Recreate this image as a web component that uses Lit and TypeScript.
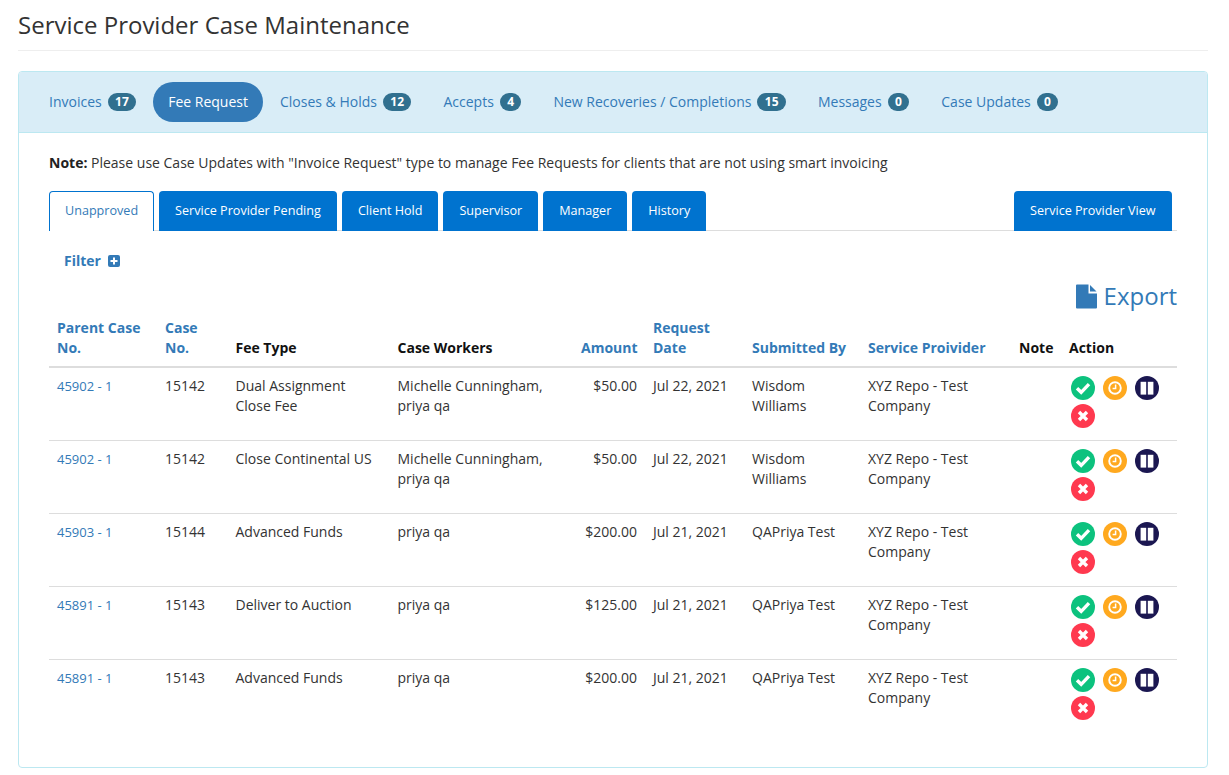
import { LitElement, html, css, svg } from "lit";
import { customElement } from "lit/decorators.js";

const pills = [
  ["Invoices", "17"],
  ["Fee Request", ""],
  ["Closes & Holds", "12"],
  ["Accepts", "4"],
  ["New Recoveries / Completions", "15"],
  ["Messages", "0"],
  ["Case Updates", "0"],
];
const tabs = ["Service Provider Pending", "Client Hold", "Supervisor", "Manager", "History"];
const rows = [
  ["45902 - 1", "15142", "Dual Assignment Close Fee", "Michelle Cunningham, priya qa", "$50.00", "Jul 22, 2021", "Wisdom Williams"],
  ["45902 - 1", "15142", "Close Continental US", "Michelle Cunningham, priya qa", "$50.00", "Jul 22, 2021", "Wisdom Williams"],
  ["45903 - 1", "15144", "Advanced Funds", "priya qa", "$200.00", "Jul 21, 2021", "QAPriya Test"],
  ["45891 - 1", "15143", "Deliver to Auction", "priya qa", "$125.00", "Jul 21, 2021", "QAPriya Test"],
  ["45891 - 1", "15143", "Advanced Funds", "priya qa", "$200.00", "Jul 21, 2021", "QAPriya Test"],
];

const check = svg`<path d="M6 12.2l4.2 4.1 7.8-8.2" fill="none" stroke="#fff" stroke-width="3.4"/>`;
const clock = svg`<circle cx="12" cy="12" r="5.8" fill="none" stroke="#fff" stroke-width="1.9"/><path d="M12.6 8.6v4h-3" fill="none" stroke="#fff" stroke-width="1.5"/>`;
const pause = svg`<rect x="5.6" y="5.8" width="5.6" height="12.8" fill="#fff"/><rect x="12.8" y="5.8" width="5.6" height="12.8" fill="#fff"/>`;
const cross = svg`<path d="M8 8l8 8M16 8l-8 8" fill="none" stroke="#fff" stroke-width="3.4"/>`;

@customElement("app-root")
export class AppRoot extends LitElement {
  static styles = css`
    :host {
      display: block;
      font-family: "Open Sans", sans-serif;
      font-size: 14px;
      line-height: 20px;
      color: #333;
      background: #fff;
    }
    .page { padding: 0 21px 0 18px; }
    .title {
      margin: 0 0 20px;
      height: 50px;
      box-sizing: content-box;
      border-bottom: 1px solid #eee;
      font-size: 24px;
      font-weight: 400;
      line-height: 50px;
      white-space: nowrap;
    }
    .panel {
      border: 1px solid #bce8f1;
      border-radius: 4px;
      height: 695px;
      overflow: hidden;
    }
    .heading {
      display: flex;
      gap: 2px;
      padding: 10px 15px;
      background: #d9edf7;
      border-bottom: 1px solid #bce8f1;
    }
    .pill {
      display: flex;
      align-items: center;
      height: 40px;
      padding: 0 15px;
      color: #337ab7;
      white-space: nowrap;
      border-radius: 20px;
    }
    .pill.active { background: #337ab7; color: #fff; }
    .badge {
      margin-left: 6px;
      padding: 0 7.4px;
      height: 18px;
      line-height: 18px;
      border-radius: 10px;
      background: #31708f;
      color: #fff;
      font-size: 12px;
      font-weight: 700;
    }
    .body { padding: 20px 30px 0; }
    .note { margin: 0 0 18px; white-space: nowrap; }
    .note b { color: #222; }
    .tabs {
      display: flex;
      gap: 5px;
      height: 40px;
      box-sizing: border-box;
      border-bottom: 1px solid #ddd;
    }
    .tab {
      display: flex;
      align-items: center;
      height: 40px;
      box-sizing: border-box;
      padding: 0 16px 1px;
      font-size: 12.6px;
      background: #0073cf;
      color: #fff;
      border-radius: 4px 4px 0 0;
      white-space: nowrap;
    }
    .tab.active {
      background: #fff;
      color: #337ab7;
      padding: 0 15px 1px;
      border: 1px solid #0073cf;
      border-bottom: none;
    }
    .tab.right { margin-left: auto; margin-right: 5px; padding: 0 16.5px 1px; }
    .filter {
      display: flex;
      align-items: center;
      gap: 7px;
      margin: 20px 0 0 15px;
      height: 20px;
      color: #337ab7;
      font-weight: 700;
    }
    .export {
      display: flex;
      justify-content: flex-end;
      align-items: center;
      gap: 7px;
      margin-top: 8px;
      height: 34px;
      margin-bottom: -3px;
      font-size: 24px;
      color: #337ab7;
    }
    table { border-collapse: collapse; table-layout: fixed; width: 1128px; }
    th {
      padding: 8px;
      text-align: left;
      vertical-align: bottom;
      font-weight: 700;
      color: #111;
      border-bottom: 2px solid #ddd;
    }
    th.link { color: #337ab7; }
    td {
      padding: 8px;
      vertical-align: top;
      border-top: 1px solid #ddd;
    }
    tr:first-child td { border-top: none; }
    .r { text-align: right; }
    .case { font-size: 13px; color: #337ab7; }
    .actions { display: flex; flex-wrap: wrap; gap: 4px 8px; height: 56px; padding-left: 2px; align-content: flex-start; }
    .actions svg { display: block; width: 24px; height: 24px; }
  `;

  private icon(color: string, inner: unknown) {
    return html`<svg viewBox="0 0 24 24"><circle cx="12" cy="12" r="12" fill=${color}></circle>${inner}</svg>`;
  }

  render() {
    return html`<div class="page">
      <h1 class="title">Service Provider Case Maintenance</h1>
      <div class="panel">
        <div class="heading">
          ${pills.map(([label, n]) => html`<div class="pill ${n ? "" : "active"}">${label}${n ? html`<span class="badge">${n}</span>` : ""}</div>`)}
        </div>
        <div class="body">
          <p class="note"><b>Note:</b> Please use Case Updates with "Invoice Request" type to manage Fee Requests for clients that are not using smart invoicing</p>
          <div class="tabs">
            <div class="tab active">Unapproved</div>
            ${tabs.map((t) => html`<div class="tab">${t}</div>`)}
            <div class="tab right">Service Provider View</div>
          </div>
          <div class="filter">Filter
            <svg width="12" height="12" viewBox="0 0 12 12"><rect width="12" height="12" rx="2" fill="#337ab7"></rect><path d="M6 2.5v7M2.5 6h7" stroke="#fff" stroke-width="2"></path></svg>
          </div>
          <div class="export">
            <svg width="21" height="25" viewBox="0 0 21 25"><path d="M1 .5a1 1 0 0 0-1 1v22a1 1 0 0 0 1 1h19a1 1 0 0 0 1-1V9.5H12.5V.5z" fill="#337ab7"></path><path d="M14 1l6.5 6.5H14z" fill="#337ab7"></path></svg>
            <span>Export</span>
          </div>
          <table>
            <colgroup>
              <col style="width:108px" /><col style="width:70.5px" /><col style="width:162px" /><col style="width:183.5px" /><col style="width:72px" /><col style="width:99px" /><col style="width:116px" /><col style="width:151px" /><col style="width:50px" /><col style="width:116px" />
            </colgroup>
            <thead>
              <tr>
                <th class="link">Parent Case No.</th>
                <th class="link">Case No.</th>
                <th>Fee Type</th>
                <th>Case Workers</th>
                <th class="link r">Amount</th>
                <th class="link">Request Date</th>
                <th class="link">Submitted By</th>
                <th class="link">Service Proivider</th>
                <th>Note</th>
                <th>Action</th>
              </tr>
            </thead>
            <tbody>
              ${rows.map(
                (r) => html`<tr>
                  <td class="case">${r[0]}</td>
                  <td>${r[1]}</td>
                  <td>${r[2]}</td>
                  <td>${r[3]}</td>
                  <td class="r">${r[4]}</td>
                  <td>${r[5]}</td>
                  <td>${r[6]}</td>
                  <td>XYZ Repo - Test Company</td>
                  <td></td>
                  <td>
                    <div class="actions">
                      ${this.icon("#0cc27e", check)}${this.icon("#ffa91f", clock)}${this.icon("#1b1751", pause)}${this.icon("#ff394f", cross)}
                    </div>
                  </td>
                </tr>`
              )}
            </tbody>
          </table>
        </div>
      </div>
    </div>`;
  }
}
